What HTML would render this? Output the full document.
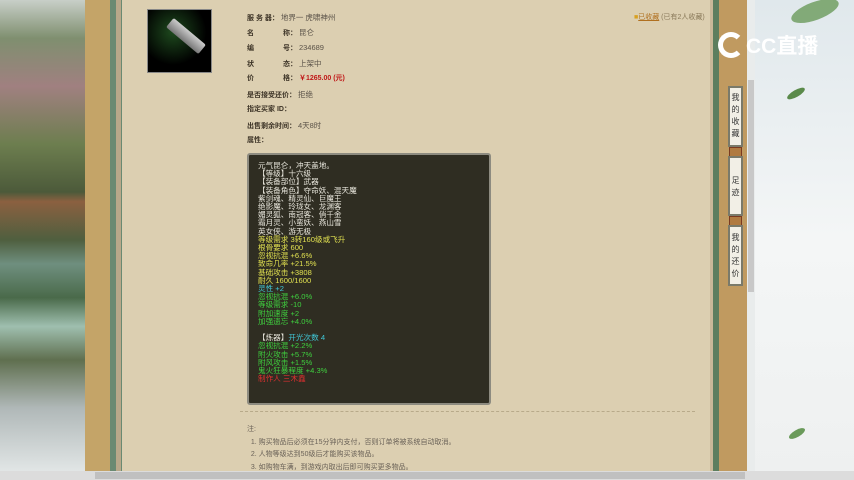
<!DOCTYPE html>
<html><head><meta charset="utf-8"><style>
*{margin:0;padding:0;box-sizing:border-box}
body{width:854px;height:480px;overflow:hidden;position:relative;background:#e9ecec;font-family:"Liberation Sans","Noto Sans CJK SC",sans-serif;font-size:7.5px;color:#333}
.a{position:absolute;white-space:nowrap}
.lb{left:0;top:0;width:85px;height:480px;background:linear-gradient(180deg,#c8cfc8 0%,#7f8f6f 8%,#a08080 18%,#6d7e4f 30%,#4c5a3a 40%,#8b6040 42%,#4f5f3f 50%,#6f8f7f 55%,#4a6a4a 62%,#9fbfaf 68%,#5f6f4f 75%,#b0b8b8 85%,#e8ecec 100%)}
.lbl{color:#3c3326;font-weight:bold;font-size:7px}
.lbl b{display:inline-block;width:36px;font-weight:bold}
.v{color:#5a5248;font-size:7.5px;font-weight:normal}
.box{left:247px;top:153px;width:244px;height:252px;background:#2f2d22;border:2px solid #8d8b80;border-radius:3px;padding:7px 9px;line-height:8.2px;font-size:7.6px;color:#e8e6dc}
.y{color:#e0e050}.g{color:#3fd03f}.c{color:#40c8d8}.r{color:#e03030}
.tab{left:728px;width:15px;background:#f2efe6;border:2px solid #7a7a6a;font-size:8px;text-align:center;line-height:17px;color:#333}
</style></head><body>
<div class="a lb"></div>
<div class="a" style="left:85px;top:0;width:25px;height:471px;background:#c4a468"></div>
<div class="a" style="left:110px;top:0;width:6px;height:471px;background:#6a8a72"></div>
<div class="a" style="left:116px;top:0;width:6px;height:471px;background:#b8a88a"></div>
<div class="a" style="left:121px;top:0;width:1px;height:471px;background:#6a8a72"></div>
<div class="a" style="left:122px;top:0;width:588px;height:471px;background:#dccfb1"></div>
<div class="a" style="left:710px;top:0;width:3px;height:471px;background:#c8b898"></div>
<div class="a" style="left:713px;top:0;width:6px;height:471px;background:#5c7e5e"></div>
<div class="a" style="left:719px;top:0;width:28px;height:471px;background:#c09a60"></div>
<div class="a" style="left:748px;top:80px;width:6px;height:212px;background:#c8c8c8"></div>
<div class="a" style="left:755px;top:0;width:99px;height:480px;background:linear-gradient(180deg,#e0e8ec,#f4f6f6 50%,#eef0f0)"></div>
<div class="a" style="left:790px;top:2px;width:50px;height:18px;background:#6a9a5a;border-radius:50%;transform:rotate(-20deg);opacity:.8"></div>
<div class="a" style="left:786px;top:90px;width:20px;height:7px;background:#5a8a4a;border-radius:50%;transform:rotate(-30deg)"></div>
<div class="a" style="left:788px;top:430px;width:18px;height:7px;background:#6a9a5a;border-radius:50%;transform:rotate(-30deg)"></div>
<div class="a" style="left:718px;top:32px;width:26px;height:26px;border:5px solid #fff;border-radius:50%;border-right-color:transparent"></div>
<div class="a" style="left:746px;top:30px;color:#fff;font-size:21px;font-weight:bold">CC直播</div>
<div class="a" style="left:0;top:471px;width:854px;height:9px;background:#dcdcdc"></div>
<div class="a" style="left:95px;top:472px;width:650px;height:7px;background:#c0c0c0"></div>
<div class="a" style="left:147px;top:9px;width:65px;height:64px;border:1px solid #888;background:radial-gradient(circle at 40% 35%,#1e4a1e,#000 60%)"></div>
<div class="a" style="left:165px;top:30px;width:42px;height:12px;background:linear-gradient(#ccc,#777);transform:rotate(40deg);border-radius:2px"></div>
<div class="a lbl" style="left:247px;top:12px">服 务 器： <span class="v">地界一 虎啸神州</span></div>
<div class="a lbl" style="left:247px;top:27px"><b>名</b>称： <span class="v">昆仑</span></div>
<div class="a lbl" style="left:247px;top:43px"><b>编</b>号： <span class="v">234689</span></div>
<div class="a lbl" style="left:247px;top:58px"><b>状</b>态： <span class="v">上架中</span></div>
<div class="a lbl" style="left:247px;top:73px"><b>价</b>格： <span style="color:#c01818">￥1265.00 (元)</span></div>
<div class="a lbl" style="left:247px;top:89px">是否接受还价： <span class="v">拒绝</span></div>
<div class="a lbl" style="left:247px;top:104px">指定买家 ID：</div>
<div class="a lbl" style="left:247px;top:120px">出售剩余时间： <span class="v">4天8时</span></div>
<div class="a lbl" style="left:247px;top:135px">属性：</div>
<div class="a" style="left:634px;top:12px;font-size:7px;color:#8a7a5a"><span style="color:#d8a020">■</span><span style="color:#b07020;text-decoration:underline">已收藏</span> (已有2人收藏)</div>
<div class="a box">元气昆仑，冲天盖地。<br>【等级】十六级<br>【装备部位】武器<br>【装备角色】夺命妖、混天魔<br>紫剑魂、精灵仙、巨魔王<br>绝影魔、玲珑女、龙渊客<br>媚灵狐、南冠客、俏千金<br>霜月灵、小蛮妖、燕山雪<br>英女侠、游无极<br><span class="y">等级需求 3转160级或飞升<br>根骨要求 600<br>忽视抗混 +6.6%<br>致命几率 +21.5%<br>基础攻击 +3808<br>耐久 1600/1600</span><br><span class="c">灵性 +2</span><br><span class="g">忽视抗混 +6.0%<br>等级需求 -10<br>附加速度 +2<br>加强遗忘 +4.0%</span><br><br>【炼器】<span class="c">开光次数 4</span><br><span class="g">忽视抗混 +2.2%<br>附火攻击 +5.7%<br>附风攻击 +1.5%<br>鬼火狂暴程度 +4.3%</span><br><span class="r">制作人 三木鑫</span></div>
<div class="a" style="left:240px;top:411px;width:455px;border-top:1px dashed #b8aa8a"></div>
<div class="a" style="left:247px;top:424px;font-size:7px;color:#6a6258;line-height:12.5px">注:<br>&nbsp;&nbsp;1. 购买物品后必须在15分钟内支付，否则订单将被系统自动取消。<br>&nbsp;&nbsp;2. 人物等级达到50级后才能购买该物品。<br>&nbsp;&nbsp;3. 如购物车满，到游戏内取出后即可购买更多物品。</div>
<div class="a tab" style="top:86px;height:61px;line-height:12px;padding-top:4px">我<br>的<br>收<br>藏</div>
<div class="a" style="left:729px;top:147px;width:13px;height:10px;background:#b07a40;border:1px solid #7a3a20"></div>
<div class="a tab" style="top:156px;height:60px;line-height:12px;padding-top:17px">足<br>迹</div>
<div class="a" style="left:729px;top:216px;width:13px;height:10px;background:#b07a40;border:1px solid #7a3a20"></div>
<div class="a tab" style="top:225px;height:61px;line-height:12px;padding-top:5px">我<br>的<br>还<br>价</div>
</body></html>
